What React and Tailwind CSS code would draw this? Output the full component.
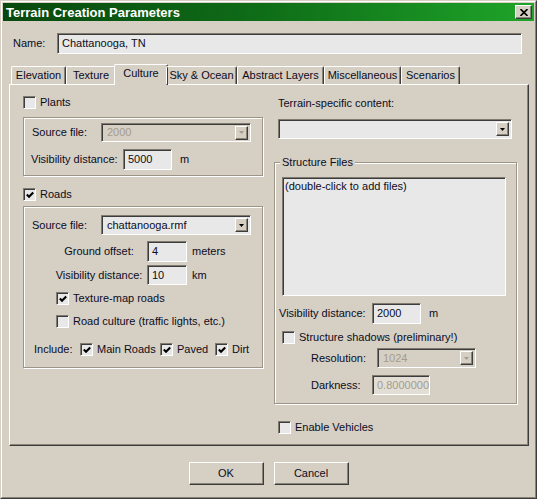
import React from 'react';

const sunken =
  'border border-t-[#7f7a70] border-l-[#7f7a70] border-b-white border-r-white shadow-[inset_1px_1px_0_#3c3c3c]';
const raised =
  'border border-t-white border-l-white border-b-[#3c3c3c] border-r-[#3c3c3c] shadow-[inset_-1px_-1px_0_#8a8478]';
const etched = 'border border-[#9c9484] shadow-[1px_1px_0_#ffffff,inset_1px_1px_0_#ffffff]';

function Check({ checked }) {
  return (
    <span className={`w-[13px] h-[13px] shrink-0 flex items-center justify-center bg-[#e8e8e8] ${sunken}`}>
      {checked && (
        <svg width="8" height="8" viewBox="0 0 8 8">
          <path d="M0.8 3.6 L3 5.8 L7.2 1.4" fill="none" stroke="#000" strokeWidth="2.1" />
        </svg>
      )}
    </span>
  );
}

function CheckRow({ checked, label, className = '' }) {
  return (
    <div className={`flex items-center gap-[4px] h-[13px] leading-none ${className}`}>
      <Check checked={checked} />
      <span>{label}</span>
    </div>
  );
}

function Select({ value, disabled, className = '' }) {
  return (
    <div
      className={`${sunken} ${disabled ? 'bg-[#d6cfc4] text-[#a49c8c]' : 'bg-[#e8e8e8]'} flex items-center pl-[5px] pr-[2px] shrink-0 ${className}`}
    >
      <span className="flex-1 leading-none">{value}</span>
      <span className={`w-[13px] h-[14px] ${raised} bg-[#d6cfc4] flex items-center justify-center`}>
        <svg width="5" height="3" viewBox="0 0 5 3">
          <path d="M0 0H5L2.5 3Z" fill={disabled ? '#a49c8c' : '#000'} />
        </svg>
      </span>
    </div>
  );
}

function Field({ value, disabled, className = '' }) {
  return (
    <div
      className={`${sunken} ${disabled ? 'bg-[#e2ded6] text-[#a49c8c]' : 'bg-[#e8e8e8]'} flex items-center pl-[4px] leading-none shrink-0 ${className}`}
    >
      {value}
    </div>
  );
}

const tabs = [
  ['Elevation', 'w-[55px]'],
  ['Texture', 'w-[50px]'],
  ['Culture', 'w-[54px]', true],
  ['Sky & Ocean', 'w-[71px]'],
  ['Abstract Layers', 'w-[87px]'],
  ['Miscellaneous', 'w-[77px]'],
  ['Scenarios', 'w-[59px]'],
];

export default function App() {
  return (
    <div className="w-[537px] h-[499px] bg-[#d6cfc4] border border-[#d6cfc4] border-b-[#3c3c3c] border-r-[#3c3c3c] font-['Liberation_Sans',Arial,sans-serif] text-[11px] text-[#0c0c1c] whitespace-nowrap">
      <div className="h-full border border-white border-b-[#8a8478] border-r-[#8a8478] p-px flex flex-col">
        {/* Title bar */}
        <div className="h-[18px] shrink-0 flex items-center bg-gradient-to-r from-[#08480e] via-[#0f6e18] to-[#1fa529] pl-[3px] pr-[2px]">
          <span className="flex-1 text-white font-bold text-[13px] leading-none">Terrain Creation Parameters</span>
          <span className={`w-[17px] h-[14px] ${raised} bg-[#d6cfc4] flex items-center justify-center`}>
            <svg width="8" height="7" viewBox="0 0 8 7">
              <path d="M0.5 0 L7.5 7 M7.5 0 L0.5 7" stroke="#000" strokeWidth="1.6" />
            </svg>
          </span>
        </div>

        {/* Name */}
        <div className="mt-[12px] h-[21px] flex items-center pl-[10px]">
          <span className="w-[44px]">Name:</span>
          <Field value="Chattanooga, TN" className="w-[465px] h-[21px]" />
        </div>

        {/* Tabs */}
        <div className="mt-[10px] h-[21px] -mb-px relative z-10 flex items-start pl-[8px]">
          {tabs.map(([label, w, sel]) =>
            sel ? (
              <div
                key={label}
                className={`${w} -mx-[2px] h-[21px] bg-[#d6cfc4] border-t border-l border-r border-t-white border-l-white border-r-[#3c3c3c] rounded-t-[2px] shadow-[inset_-1px_0_0_#8a8478] flex items-start justify-center pt-[3px] leading-none`}
              >
                {label}
              </div>
            ) : (
              <div
                key={label}
                className={`${w} mt-[2px] h-[18px] border-t border-l border-r border-t-white border-l-white border-r-[#3c3c3c] rounded-t-[2px] shadow-[inset_-1px_0_0_#8a8478] flex items-center justify-center leading-none`}
              >
                {label}
              </div>
            )
          )}
        </div>

        {/* Panel */}
        <div className={`ml-[6px] w-[520px] h-[362px] shrink-0 ${raised} flex`}>
          {/* Left column */}
          <div className="ml-[13px] w-[240px] flex flex-col">
            <CheckRow label="Plants" className="mt-[11px]" />
            <div className={`mt-[8px] h-[59px] ${etched} flex flex-col`}>
              <div className="mt-[5px] h-[19px] flex items-center pl-[8px]">
                <span className="w-[69px]">Source file:</span>
                <Select value="2000" disabled className="w-[150px] h-[19px]" />
              </div>
              <div className="mt-[7px] h-[21px] flex items-center pl-[7px]">
                <span className="w-[92px]">Visibility distance:</span>
                <Field value="5000" className="w-[49px] h-[21px]" />
                <span className="ml-[8px]">m</span>
              </div>
            </div>

            <CheckRow checked label="Roads" className="mt-[12px]" />
            <div className={`mt-[5px] h-[162px] ${etched} flex flex-col`}>
              <div className="mt-[8px] h-[20px] flex items-center pl-[8px]">
                <span className="w-[69px]">Source file:</span>
                <Select value="chattanooga.rmf" className="w-[150px] h-[20px]" />
              </div>
              <div className="mt-[6px] h-[21px] flex items-center pl-[30px]">
                <span className="w-[90px] text-center">Ground offset:</span>
                <Field value="4" className="ml-[3px] w-[40px] h-[21px]" />
                <span className="ml-[5px]">meters</span>
              </div>
              <div className="mt-[3px] h-[20px] flex items-center pl-[30px]">
                <span className="w-[90px] text-center">Visibility distance:</span>
                <Field value="10" className="ml-[3px] w-[40px] h-[20px]" />
                <span className="ml-[5px]">km</span>
              </div>
              <CheckRow checked label="Texture-map roads" className="mt-[7px] ml-[32px]" />
              <CheckRow label="Road culture (traffic lights, etc.)" className="mt-[10px] ml-[32px]" />
              <div className="mt-[15px] h-[13px] flex items-center pl-[10px] leading-none">
                <span className="w-[46px]">Include:</span>
                <CheckRow checked label="Main Roads" className="w-[80px]" />
                <CheckRow checked label="Paved" className="w-[55px]" />
                <CheckRow checked label="Dirt" />
              </div>
            </div>
          </div>

          {/* Right column */}
          <div className="ml-[11px] w-[243px] flex flex-col">
            <div className="mt-[12px] h-[13px] pl-[4px] leading-[13px]">Terrain-specific content:</div>
            <Select value="" className="mt-[9px] ml-[4px] w-[234px] h-[20px]" />

            <fieldset className={`mt-[17px] h-[248px] ${etched} flex flex-col`}>
              <legend className="ml-[5px] px-[2px] bg-[#d6cfc4] leading-[13px]">Structure Files</legend>
              <div className={`mt-[8px] ml-[7px] w-[224px] h-[119px] ${sunken} bg-[#e8e8e8] pl-[2px] pt-[2px] leading-[13px]`}>
                (double-click to add files)
              </div>
              <div className="mt-[7px] h-[21px] flex items-center ml-[4px]">
                <span className="w-[93px]">Visibility distance:</span>
                <Field value="2000" className="w-[49px] h-[21px]" />
                <span className="ml-[8px]">m</span>
              </div>
              <CheckRow label="Structure shadows (preliminary!)" className="mt-[7px] ml-[7px]" />
              <div className="mt-[4px] h-[20px] flex items-center ml-[36px]">
                <span className="w-[66px]">Resolution:</span>
                <Select value="1024" disabled className="w-[99px] h-[20px]" />
              </div>
              <div className="mt-[7px] h-[20px] flex items-center ml-[36px]">
                <span className="w-[61px]">Darkness:</span>
                <Field value="0.8000000" disabled className="w-[58px] h-[20px]" />
              </div>
            </fieldset>

            <CheckRow label="Enable Vehicles" className="mt-[17px] ml-[4px]" />
          </div>
        </div>

        {/* Buttons */}
        <div className="mt-[16px] flex justify-center gap-[10px]">
          <button className={`w-[75px] h-[23px] ${raised} bg-[#d6cfc4] leading-none`}>OK</button>
          <button className={`w-[75px] h-[23px] ${raised} bg-[#d6cfc4] leading-none`}>Cancel</button>
        </div>
      </div>
    </div>
  );
}
